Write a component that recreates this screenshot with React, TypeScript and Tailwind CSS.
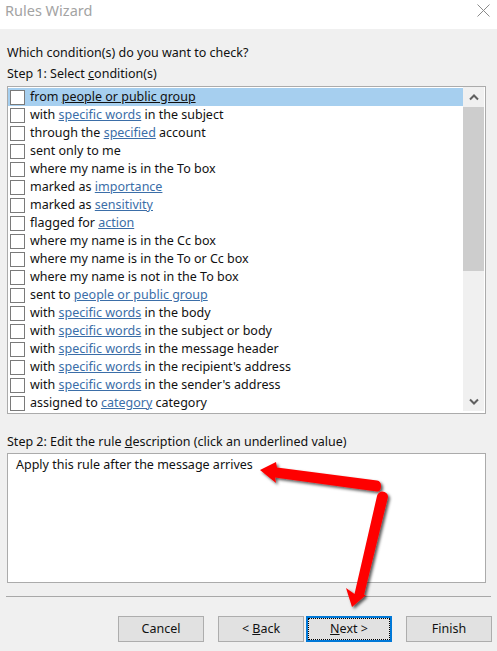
const FONT = "font-['Noto_Sans','Open_Sans',sans-serif]";

type Part = string | { link: string };
const rows: Part[][] = [
  ["from ", { link: "people or public group" }],
  ["with ", { link: "specific words" }, " in the subject"],
  ["through the ", { link: "specified" }, " account"],
  ["sent only to me"],
  ["where my name is in the To box"],
  ["marked as ", { link: "importance" }],
  ["marked as ", { link: "sensitivity" }],
  ["flagged for ", { link: "action" }],
  ["where my name is in the Cc box"],
  ["where my name is in the To or Cc box"],
  ["where my name is not in the To box"],
  ["sent to ", { link: "people or public group" }],
  ["with ", { link: "specific words" }, " in the body"],
  ["with ", { link: "specific words" }, " in the subject or body"],
  ["with ", { link: "specific words" }, " in the message header"],
  ["with ", { link: "specific words" }, " in the recipient's address"],
  ["with ", { link: "specific words" }, " in the sender's address"],
  ["assigned to ", { link: "category" }, " category"],
];

function Row({ parts, selected }: { parts: Part[]; selected: boolean }) {
  return (
    <div className={`h-[18px] flex items-center gap-[5px] pl-[2px] whitespace-pre ${selected ? "bg-[#a6cfef]" : ""}`}>
      <span className="w-[15px] h-[15px] shrink-0 border border-[#7a7a7a] bg-white" />
      <span className="leading-[18px]">
        {parts.map((p, i) =>
          typeof p === "string" ? (
            <span key={i}>{p}</span>
          ) : (
            <span key={i} className={selected ? "underline text-[#111]" : "underline text-[#3b6ea8]"}>
              {p.link}
            </span>
          ),
        )}
      </span>
    </div>
  );
}

function Btn({ children, focus }: { children: React.ReactNode; focus?: boolean }) {
  return (
    <button
      className={`w-[86px] h-[26px] flex items-center justify-center bg-[#e1e1e1] text-[12.5px] text-[#111] ${
        focus ? "border-2 border-[#0078d7] outline-1 outline-dotted outline-black -outline-offset-3" : "border border-[#adadad]"
      }`}
    >
      {children}
    </button>
  );
}

export default function App() {
  return (
    <div className={`relative w-[497px] h-[651px] overflow-hidden bg-[#f0f0f0] text-[12.5px] text-[#111] ${FONT}`}>
      <div className="h-[29px] bg-white flex items-start justify-between pl-[5px] pr-[7px]">
        <span className="text-[14.5px] leading-[20px] text-[#a3a3a3]">Rules Wizard</span>
        <svg width="13" height="13" viewBox="0 0 13 13" className="text-[#8a8a8a] mt-[4px]">
          <path d="M0.5 0.5L12.5 12.5M12.5 0.5L0.5 12.5" stroke="currentColor" strokeWidth="1" fill="none" />
        </svg>
      </div>

      <div className="pl-[7px] pr-[11px]">
        <div className="pt-[15px] leading-[18px]">Which condition(s) do you want to check?</div>
        <div className="pt-[3px] leading-[18px]">
          Step 1: Select <span className="underline">c</span>ondition(s)
        </div>

        <div className="mt-[3px] h-[328px] border-[1.5px] border-[#ababab] bg-white flex">
          <div className="w-[455px] pt-[1px] shrink-0">
            {rows.map((r, i) => (
              <Row key={i} parts={r} selected={i === 0} />
            ))}
          </div>
          <div className="flex-1 bg-[#f0f0f0] flex flex-col mb-[2px] mr-[1px]">
            <div className="h-[20px] flex items-center justify-center">
              <svg width="10" height="7" viewBox="0 0 10 7"><path d="M1 5.5L5 1.5L9 5.5" stroke="#606060" strokeWidth="2" fill="none" /></svg>
            </div>
            <div className="h-[164px] bg-[#cdcdcd]" />
            <div className="flex-1" />
            <div className="h-[20px] flex items-center justify-center">
              <svg width="10" height="7" viewBox="0 0 10 7"><path d="M1 1.5L5 5.5L9 1.5" stroke="#606060" strokeWidth="2" fill="none" /></svg>
            </div>
          </div>
        </div>

        <div className="pt-[19px] leading-[18px]">
          Step 2: Edit the rule <span className="underline">d</span>escription (click an underlined value)
        </div>
        <div className="mt-[2px] h-[130px] border-[1.5px] border-[#ababab] bg-white pl-[8px] pt-[2px] leading-[18px]">
          Apply this rule after the message arrives
        </div>
      </div>

      <div className="mt-[13px] ml-[6px] w-[485px] h-[2px] border-t border-[#a8a8a8]" />

      <div className="mt-[18px] pl-[118px] flex">
        <Btn>Cancel</Btn>
        <div className="ml-[14px]">
          <Btn>
            &lt;&nbsp;<span className="underline">B</span>ack
          </Btn>
        </div>
        <div className="ml-[2px]">
          <Btn focus>
            <span className="underline">N</span>ext &gt;
          </Btn>
        </div>
        <div className="ml-[14px]">
          <Btn>Finish</Btn>
        </div>
      </div>

      <svg className="absolute left-0 top-0 pointer-events-none" width="497" height="651" viewBox="0 0 497 651">
        <defs>
          <filter id="s" x="-20%" y="-20%" width="140%" height="140%">
            <feDropShadow dx="2" dy="2" stdDeviation="1.5" floodColor="#000" floodOpacity="0.65" />
          </filter>
        </defs>
        <g filter="url(#s)" fill="#fe0000">
          <path d="M260 470L276 462L277 467.5L377 480.5Q381 481 381 486Q381 491.5 377 491.5L275 477.5L276 483Z" />
          <path d="M382 491.5Q388 492 388 497L364 595L366 595L352 607L346 588L354.5 594L377 496Q378 492 382 491.5Z" />
        </g>
      </svg>
    </div>
  );
}
